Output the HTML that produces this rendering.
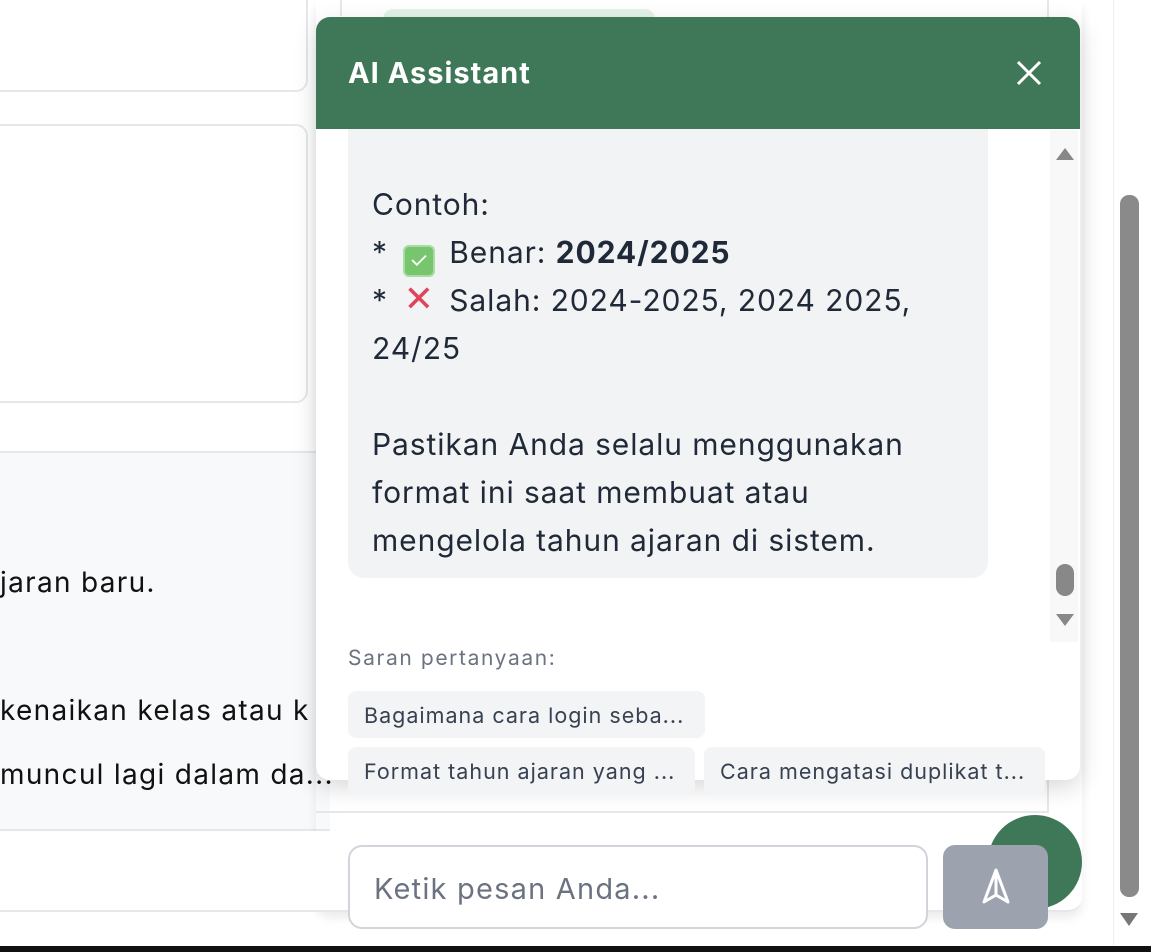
<!DOCTYPE html>
<html><head><meta charset="utf-8">
<style>
*{box-sizing:border-box;margin:0;padding:0}
body{width:1151px;height:952px;overflow:hidden;background:#fff;position:relative;font-family:"Inter","Liberation Sans","DejaVu Sans",sans-serif}
.abs{position:absolute}
.card{border:2px solid #e5e7eb;border-radius:12px;background:#fff}
.chip{background:#f3f4f6;border-radius:8px;font-size:21.5px;letter-spacing:1px;color:#374151;padding:12px 0 0 16px;white-space:nowrap}
</style></head><body>
<div class="abs card" style="left:-20px;top:-30px;width:328px;height:122px"></div>
<div class="abs card" style="left:-20px;top:124px;width:328px;height:279px"></div>
<div class="abs" style="left:340px;top:0;width:2px;height:16px;background:#e5e7eb"></div>
<div class="abs" style="left:1047px;top:0;width:2px;height:16px;background:#e5e7eb"></div>
<div class="abs" style="left:383px;top:9px;width:272px;height:20px;border-radius:10px;background:#e3f3e8"></div>
<div class="abs" style="left:0;top:451px;width:330px;height:380px;background:#f8f9fb;border-top:2px solid #e5e7eb;border-bottom:2px solid #e5e7eb"></div>
<div class="abs" style="left:0;top:560px;font-size:28px;letter-spacing:1.3px;color:#111;line-height:44px;white-space:nowrap">
<div style="position:absolute;top:0;left:0">jaran baru.</div>
<div style="position:absolute;top:128px;left:0">kenaikan kelas atau k</div>
<div style="position:absolute;top:192px;left:0">muncul lagi dalam da...</div>
</div>
<div class="abs" style="left:316px;top:0;width:766px;height:912px;border-radius:0 0 14px 14px;box-shadow:0 6px 10px rgba(0,0,0,.08)"></div>
<div class="abs" style="left:1047px;top:16px;width:2px;height:795px;background:#e5e7eb"></div>
<div class="abs" style="left:316px;top:811px;width:733px;height:2px;background:#e5e7eb"></div>
<div class="abs" style="left:0;top:831px;width:1082px;height:81px;background:#fff;border-radius:0 0 14px 0;border-bottom:2px solid #e5e7eb"></div>
<div class="abs" style="left:988px;top:815px;width:94px;height:94px;border-radius:50%;background:#3f7858"></div>
<div class="abs" style="left:348px;top:845px;width:580px;height:84px;border:2px solid #d1d5db;border-radius:14px;background:#fff;font-size:29px;letter-spacing:1.2px;color:#6b7280;padding:24px 0 0 24px;white-space:nowrap">Ketik pesan Anda...</div>
<div class="abs" style="left:943px;top:845px;width:105px;height:84px;border-radius:12px;background:#9ca3af">
<svg width="105" height="84" viewBox="0 0 105 84"><path d="M53 25 L41 57 L53 50 L65 57 Z M53 25 L53 50" fill="none" stroke="#fff" stroke-width="3" stroke-linejoin="round"/></svg></div>
<div class="abs" style="left:316px;top:17px;width:764px;height:763px;border-radius:14px;background:#fff;box-shadow:0 8px 24px rgba(0,0,0,.15);overflow:hidden">
 <div style="height:112px;background:#3f7858;position:relative">
  <div style="position:absolute;left:32px;top:38px;color:#fff;font-size:29px;letter-spacing:1px;font-weight:bold">AI Assistant</div>
  <svg style="position:absolute;left:700px;top:43px" width="26" height="26" viewBox="0 0 26 26"><path d="M2 2L24 24M24 2L2 24" stroke="#fff" stroke-width="3"/></svg>
 </div>
 <div style="position:absolute;left:32px;top:112px;width:640px;height:449px;background:#f2f3f5;border-radius:0 0 16px 16px"></div>
 <div style="position:absolute;left:56px;top:164px;font-size:30px;letter-spacing:0.9px;line-height:48px;color:#1f2937;white-space:nowrap">
  <div>Contoh:</div>
  <div>* <span style="display:inline-block;width:32px;height:32px;background:#77c66e;border:2px solid #a8dca0;border-radius:6px;vertical-align:-5px;text-align:center;color:#fff;font-size:22px;line-height:28px;margin:0 14px 0 6px">✓</span>Benar: <b>2024/2025</b></div>
  <div>* <span style="display:inline-block;width:32px;color:#e0445a;font-weight:bold;font-size:36px;line-height:30px;margin:0 14px 0 6px;text-align:center">✕</span>Salah: 2024-2025, 2024 2025,</div>
  <div>24/25</div>
  <div>&nbsp;</div>
  <div>Pastikan Anda selalu menggunakan</div>
  <div>format ini saat membuat atau</div>
  <div>mengelola tahun ajaran di sistem.</div>
 </div>
 <div style="position:absolute;left:734px;top:113px;width:28px;height:512px;background:#f8f8f8">
  <div style="position:absolute;left:6px;top:18px;width:0;height:0;border-left:9px solid transparent;border-right:9px solid transparent;border-bottom:12px solid #888"></div>
  <div style="position:absolute;left:6px;top:434px;width:18px;height:32px;border-radius:9px;background:#888"></div>
  <div style="position:absolute;left:6px;top:484px;width:0;height:0;border-left:9px solid transparent;border-right:9px solid transparent;border-top:12px solid #888"></div>
 </div>
 <div style="position:absolute;left:32px;top:629px;font-size:21px;letter-spacing:1.6px;color:#6b7280">Saran pertanyaan:</div>
</div>
<div class="abs chip" style="left:348px;top:691px;width:357px;height:47px">Bagaimana cara login seba...</div>
<div class="abs chip" style="left:348px;top:747px;width:347px;height:48px">Format tahun ajaran yang ...</div>
<div class="abs chip" style="left:704px;top:747px;width:341px;height:48px">Cara mengatasi duplikat t...</div>
<div class="abs" style="left:1113px;top:0;width:38px;height:945px;background:#fff;border-left:1px solid #eee">
 <div style="position:absolute;left:6px;top:195px;width:19px;height:702px;border-radius:9px;background:#8a8a8a"></div>
 <div style="position:absolute;left:6px;top:913px;width:0;height:0;border-left:9px solid transparent;border-right:9px solid transparent;border-top:13px solid #777"></div>
</div>
<div class="abs" style="left:0;top:946px;width:1151px;height:6px;background:#111"></div>
</body></html>
